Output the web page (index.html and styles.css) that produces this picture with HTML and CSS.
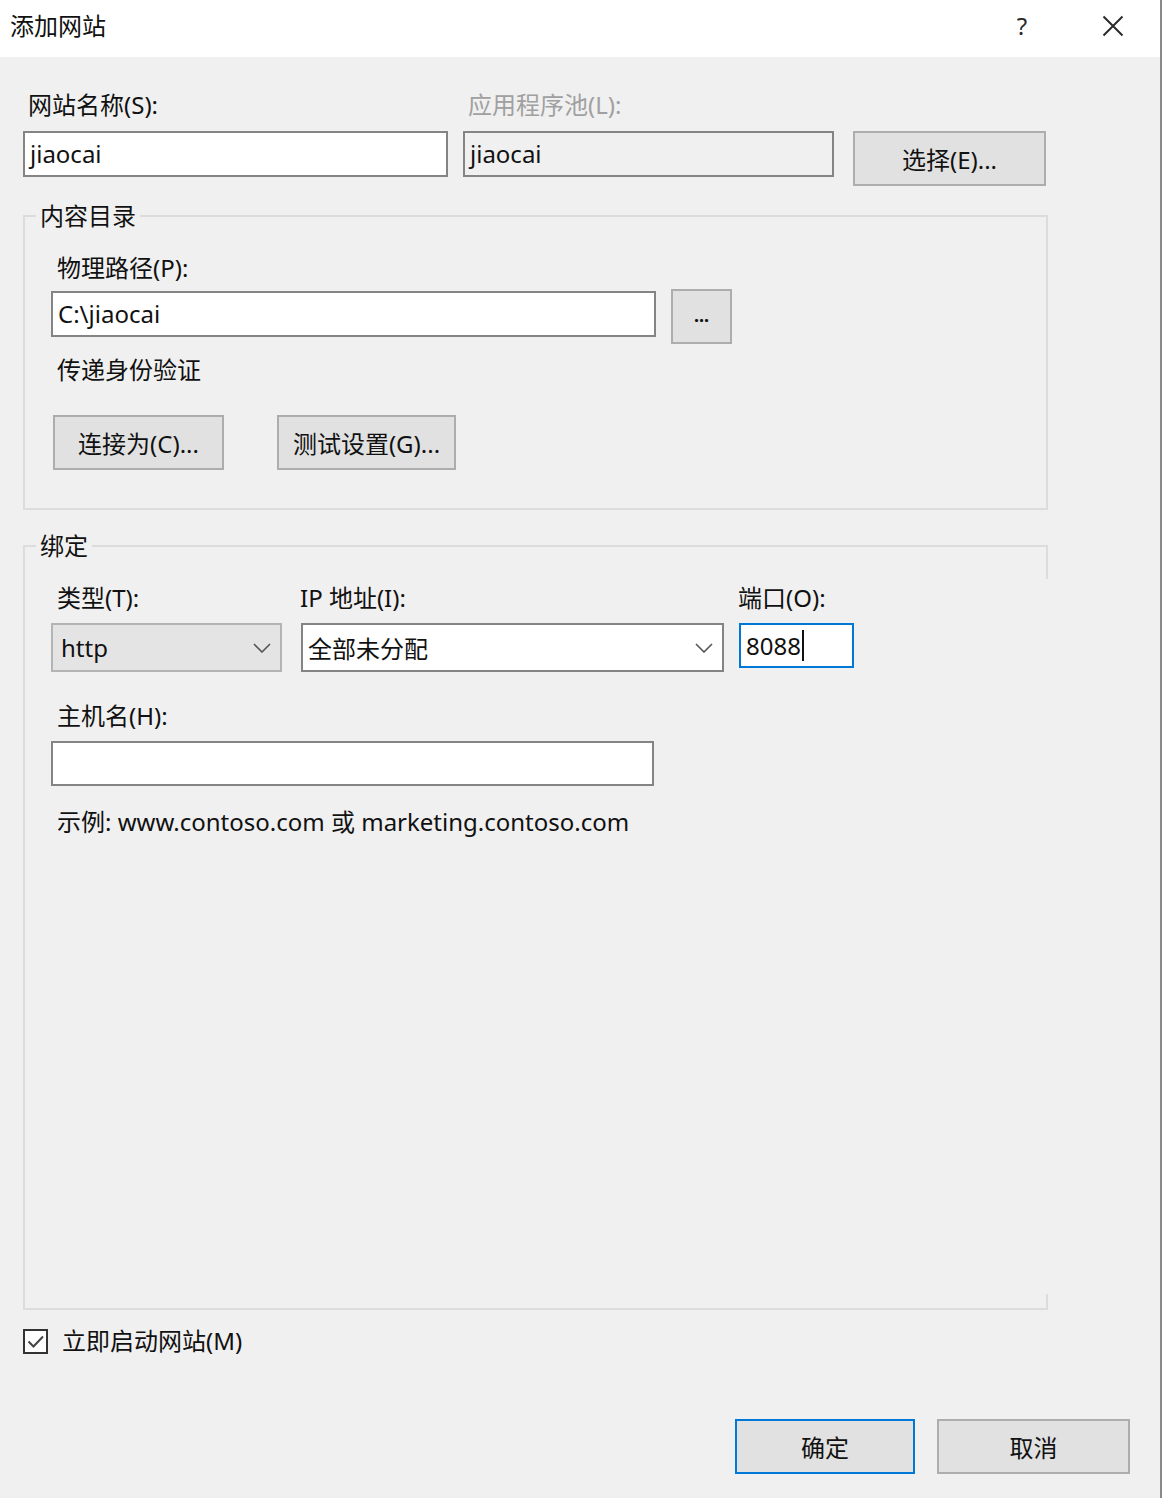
FILE: index.html
```html
<!DOCTYPE html>
<html lang="zh-CN">
<head>
<meta charset="utf-8">
<title>添加网站</title>
<link rel="stylesheet" href="styles.css">
</head>
<body>
<div class="window">
  <div class="titlebar">
    <span class="title">添加网站</span>
    <span class="tb-btn help">?</span>
    <span class="tb-btn close">
      <svg width="22" height="22" viewBox="0 0 22 22"><path d="M1.5 1.5 L20.5 20.5 M20.5 1.5 L1.5 20.5" stroke="#2b2b2b" stroke-width="2" fill="none"/></svg>
    </span>
  </div>
  <div class="content">
    <div class="label-row top">
      <span class="lbl site-lbl">网站名称(S):</span>
      <span class="lbl disabled">应用程序池(L):</span>
    </div>
    <div class="ctrl-row top-ctrls">
      <div class="textbox site-name">jiaocai</div>
      <div class="textbox readonly pool">jiaocai</div>
      <div class="btn select-btn">选择(E)...</div>
    </div>

    <fieldset class="group content-dir">
      <legend>内容目录</legend>
      <div class="group-body">
        <div class="lbl inner">物理路径(P):</div>
        <div class="ctrl-row path-row">
          <div class="textbox path">C:\jiaocai</div>
          <div class="btn browse">...</div>
        </div>
        <div class="lbl inner pass">传递身份验证</div>
        <div class="ctrl-row auth-row">
          <div class="btn connect">连接为(C)...</div>
          <div class="btn test">测试设置(G)...</div>
        </div>
      </div>
    </fieldset>

    <fieldset class="group binding">
      <legend>绑定</legend>
      <div class="group-body">
        <div class="label-row bind-labels">
          <span class="lbl col-type">类型(T):</span>
          <span class="lbl col-ip">IP 地址(I):</span>
          <span class="lbl col-port">端口(O):</span>
        </div>
        <div class="ctrl-row bind-ctrls">
          <div class="combo type-combo">
            <span>http</span>
            <svg class="chev" width="18" height="10" viewBox="0 0 18 10"><path d="M1 1 L9 9 L17 1" stroke="#555" stroke-width="1.6" fill="none"/></svg>
          </div>
          <div class="combo ip-combo">
            <span>全部未分配</span>
            <svg class="chev" width="18" height="10" viewBox="0 0 18 10"><path d="M1 1 L9 9 L17 1" stroke="#555" stroke-width="1.6" fill="none"/></svg>
          </div>
          <div class="textbox port">8088<span class="caret"></span></div>
        </div>
        <div class="lbl inner host-lbl">主机名(H):</div>
        <div class="textbox host"></div>
        <div class="lbl inner example">示例: www.contoso.com 或 marketing.contoso.com</div>
      </div>
    </fieldset>

    <div class="check-row">
      <span class="checkbox">
        <svg width="21" height="21" viewBox="0 0 21 21"><path d="M3.5 10.5 L8.5 15.5 L18 5.5" stroke="#444" stroke-width="2" fill="none"/></svg>
      </span>
      <span class="lbl">立即启动网站(M)</span>
    </div>

    <div class="footer">
      <div class="btn ok">确定</div>
      <div class="btn cancel">取消</div>
    </div>
  </div>
</div>
</body>
</html>
```

FILE: styles.css
```css
* { box-sizing: border-box; }

html, body {
  margin: 0;
  padding: 0;
}

body {
  width: 1162px;
  height: 1498px;
  font-family: "Noto Sans", "Noto Sans CJK SC", sans-serif;
  font-size: 24px;
  color: #111;
  background: #f0f0f0;
  overflow: hidden;
}

.window {
  width: 1162px;
  height: 1498px;
  display: flex;
  flex-direction: column;
  border-right: 2px solid #8a8a8a;
}

.titlebar {
  height: 57px;
  flex: none;
  background: #fff;
  display: flex;
  align-items: flex-start;
  padding: 11px 27px 0 10px;
}

.title {
  flex: 1;
  line-height: 30px;
  font-size: 24px;
}

.tb-btn {
  width: 40px;
  height: 30px;
  display: flex;
  align-items: center;
  justify-content: center;
  color: #2b2b2b;
}

.help {
  font-size: 24px;
  line-height: 30px;
  margin-right: 51px;
}

.close svg { display: block; }

.content {
  flex: 1;
  display: flex;
  flex-direction: column;
  padding: 33px 0 24px 23px;
}

.lbl {
  display: block;
  line-height: 30px;
  white-space: nowrap;
}

.disabled { color: #a0a0a0; }

.label-row {
  display: flex;
}

.site-lbl {
  width: 440px;
  padding-left: 5px;
}

.label-row.top .disabled { padding-left: 5px; }

.ctrl-row {
  display: flex;
  align-items: flex-start;
}

.top-ctrls { margin-top: 11px; }

.textbox {
  height: 46px;
  background: #fff;
  border: 2px solid #848484;
  padding-left: 5px;
  line-height: 42px;
  white-space: nowrap;
}

.readonly { background: #f0f0f0; }

.site-name { width: 425px; }
.pool { width: 371px; margin-left: 15px; }

.btn {
  height: 55px;
  background: #e1e1e1;
  border: 2px solid #adadad;
  display: flex;
  align-items: center;
  justify-content: center;
  white-space: nowrap;
}

.select-btn { width: 193px; margin-left: 19px; }

.group {
  width: 1025px;
  flex: none;
  margin: 0;
  border: 2px solid #dcdcdc;
  padding: 0;
  min-width: 0;
}

.group legend {
  margin-left: 11px;
  padding: 0 4px;
  line-height: 30px;
}

.group-body {
  padding: 22px 0 38px 26px;
}

.content-dir { margin-top: 15px; }

.inner { padding-left: 6px; }

.path-row { margin-top: 6px; }
.path { width: 605px; margin-top: 2px; }
.browse {
  width: 61px;
  margin-left: 15px;
  font-size: 18px;
  font-weight: 700;
  padding-bottom: 4px;
}

.pass { margin-top: 11px; }

.auth-row { margin-top: 30px; }
.connect { width: 171px; margin-left: 2px; }
.test { width: 179px; margin-left: 53px; }

.binding {
  margin-top: 21px;
  flex: 1 1 auto;
  border-right-color: transparent;
  position: relative;
}

.binding .group-body { padding-bottom: 0; }

.binding::before,
.binding::after {
  content: "";
  position: absolute;
  right: -2px;
  width: 2px;
  background: #dcdcdc;
}

.binding::before { top: -16px; height: 34px; }
.binding::after { bottom: -2px; height: 16px; }

.col-type { width: 250px; padding-left: 6px; }
.col-ip { width: 438px; padding-left: 0; margin-left: -1px; }

.bind-ctrls { margin-top: 10px; }

.combo {
  height: 49px;
  border: 2px solid #848484;
  display: flex;
  align-items: center;
  justify-content: space-between;
  white-space: nowrap;
}

.type-combo {
  width: 231px;
  background: #e4e4e4;
  border-color: #b4b4b4;
  padding: 0 9px 0 8px;
}

.ip-combo {
  width: 423px;
  margin-left: 19px;
  background: #fff;
  padding: 0 9px 0 5px;
}

.chev { display: block; flex: none; }

.port {
  width: 115px;
  height: 45px;
  margin-left: 15px;
  border-color: #0078d7;
  line-height: 41px;
  display: flex;
  align-items: center;
}

.caret {
  display: inline-block;
  width: 2px;
  height: 31px;
  background: #111;
  margin-left: 1px;
}

.host-lbl { margin-top: 29px; }

.host {
  width: 603px;
  height: 45px;
  margin-top: 10px;
}

.example { margin-top: 21px; }

.check-row {
  flex: none;
  margin-top: 16px;
  display: flex;
  align-items: center;
  height: 30px;
}

.checkbox {
  width: 25px;
  height: 25px;
  border: 2px solid #333;
  background: #fff;
  display: flex;
  align-items: center;
  justify-content: center;
  margin-right: 14px;
}

.checkbox svg { display: block; }

.footer {
  flex: none;
  margin-top: 63px;
  display: flex;
  justify-content: flex-end;
  padding-right: 30px;
  gap: 22px;
}

.ok {
  width: 180px;
  border-color: #0078d7;
}

.cancel { width: 193px; }
```
